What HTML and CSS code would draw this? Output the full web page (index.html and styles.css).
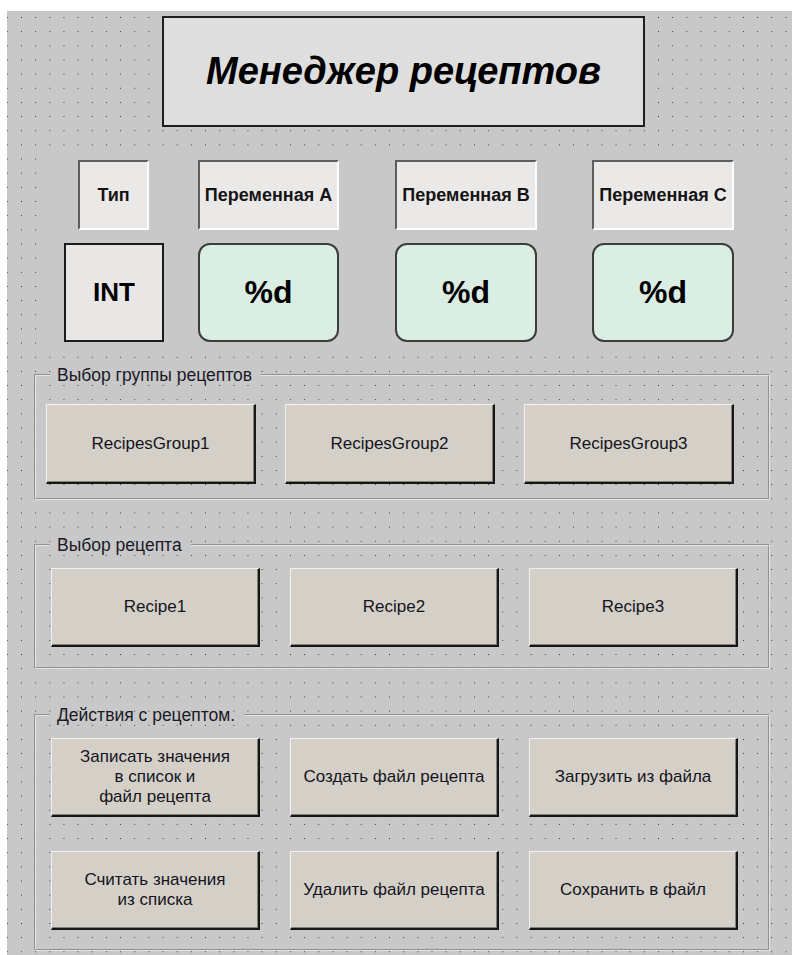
FILE: index.html
```html
<!DOCTYPE html>
<html>

<head>
  <title>Менеджер рецептов</title>
  <link rel="stylesheet" href="styles.css">
</head>

<body>
  <div class="canvas">
    <div class="title">Менеджер рецептов</div>

    <div class="vars">
      <div class="cap cap-type">Тип</div>
      <div class="cap">Переменная A</div>
      <div class="cap cap-wide">Переменная B</div>
      <div class="cap cap-wide">Переменная C</div>

      <div class="type">INT</div>
      <div class="value">%d</div>
      <div class="value value-wide">%d</div>
      <div class="value value-wide">%d</div>
    </div>

    <fieldset class="group group-first">
      <legend>Выбор группы рецептов</legend>
      <div class="buttons">
        <button>RecipesGroup1</button>
        <button>RecipesGroup2</button>
        <button>RecipesGroup3</button>
      </div>
    </fieldset>

    <fieldset class="group group-recipe">
      <legend>Выбор рецепта</legend>
      <div class="buttons">
        <button>Recipe1</button>
        <button>Recipe2</button>
        <button>Recipe3</button>
      </div>
    </fieldset>

    <fieldset class="group group-actions">
      <legend>Действия с рецептом.</legend>
      <div class="buttons">
        <button>Записать значения<br>в список и<br>файл рецепта</button>
        <button>Создать файл рецепта</button>
        <button>Загрузить из файла</button>
        <button>Считать значения<br>из списка</button>
        <button>Удалить файл рецепта</button>
        <button>Сохранить в файл</button>
      </div>
    </fieldset>
  </div>
</body>

</html>
```

FILE: styles.css
```css
body {
  margin: 0;
  background: #fff;
  font-family: "Liberation Sans", Arial, sans-serif;
  overflow: hidden;
}

/* editor canvas with the snap grid */
.canvas {
  margin: 11px 0 0 7px;
  height: 944px;
  background-color: #c8c8c8;
  background-image: radial-gradient(circle at 0.5px 0.5px, #2a2a2a 0.7px, transparent 0.8px);
  background-size: 14.17px 14.17px;
  background-position: 14px 6px;
  overflow: hidden;
}

.title {
  margin: 5px 0 0 155px;
  width: 483px;
  height: 111px;
  box-sizing: border-box;
  border: 2px solid #1e1e1e;
  background: #dedede;
  display: flex;
  justify-content: center;
  align-items: center;
  font-size: 38px;
  font-weight: bold;
  font-style: italic;
  color: #000;
}

/* variables table */
.vars {
  margin: 20px 0 0 37px;
  width: 734px;
  box-sizing: border-box;
  padding: 13px 0 10px 20px;
  background: #c8c8c8;
  display: grid;
  grid-template-columns: 134px 197px 197px 142px;
  row-gap: 13px;
}

.cap {
  width: 141px;
  height: 70px;
  box-sizing: border-box;
  border: 2px solid;
  border-color: #5e5e5e #fdfdfd #fdfdfd #5e5e5e;
  background: #ebe9e7;
  display: flex;
  justify-content: center;
  align-items: center;
  font-size: 18px;
  font-weight: bold;
  color: #141414;
  white-space: nowrap;
}

.cap-type {
  width: 71px;
  margin-left: 14px;
}

.cap-wide {
  width: 142px;
}

.type,
.value {
  height: 99px;
  box-sizing: border-box;
  display: flex;
  justify-content: center;
  align-items: center;
  font-weight: bold;
  color: #000;
}

.type {
  width: 100px;
  border: 2px solid #1c1c1c;
  background: #e9e7e5;
  font-size: 26px;
}

.value {
  width: 141px;
  border: 2px solid #3c3c3c;
  border-radius: 12px;
  background: #dbeee3;
  font-size: 32px;
}

.value-wide {
  width: 142px;
}

/* group frames */
.group {
  margin: 13px 0 0 27px;
  width: 736px;
  box-sizing: border-box;
  padding: 0;
  border: 2px groove #e6e4e0;
  min-inline-size: 0;
}

.group legend {
  margin-left: 14px;
  padding: 0 9px 0 7px;
  line-height: 20px;
  font-size: 17.5px;
  color: #1a1a26;
}

.buttons {
  display: grid;
  grid-template-columns: 209px 209px 209px;
  column-gap: 30px;
  row-gap: 34px;
  padding: 13px 0 20px 15px;
}

.group-first .buttons {
  grid-template-columns: 210px 210px 210px;
  column-gap: 29px;
  padding: 19px 0 14px 10px;
}

.group-recipe {
  margin-top: 35px;
}

.group-actions {
  margin-top: 36px;
}

.group-actions .buttons {
  padding-bottom: 19px;
}

button {
  height: 79px;
  padding: 0;
  border: 2px solid;
  border-color: #f3f1ed #161616 #161616 #f3f1ed;
  border-width: 1px 2px 2px 1px;
  box-shadow: inset -1px -1px 0 #84807a;
  background: #d4d0c8;
  font-family: "Liberation Sans", Arial, sans-serif;
  font-size: 17px;
  line-height: 20px;
  color: #141420;
}

.group-first button {
  height: 80px;
}
```
